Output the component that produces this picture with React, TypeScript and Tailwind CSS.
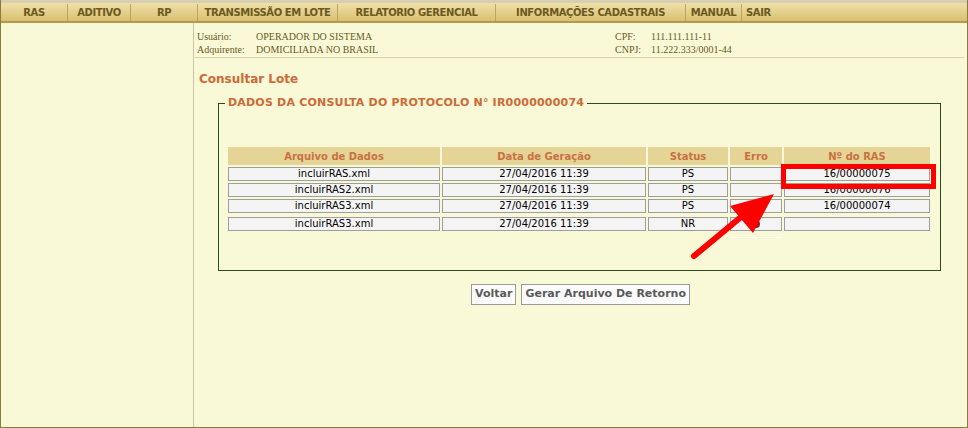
const menu = [
  { label: "RAS", w: "w-[67px]" },
  { label: "ADITIVO", w: "w-[63px]" },
  { label: "RP", w: "w-[67px]" },
  { label: "TRANSMISSÃO EM LOTE", w: "w-[140px]" },
  { label: "RELATORIO GERENCIAL", w: "w-[158px]" },
  { label: "INFORMAÇÕES CADASTRAIS", w: "w-[190px]" },
  { label: "MANUAL", w: "w-[56px]" },
];

const rows = [
  { file: "incluirRAS.xml", date: "27/04/2016 11:39", status: "PS", ras: "16/00000075" },
  { file: "incluirRAS2.xml", date: "27/04/2016 11:39", status: "PS", ras: "16/00000076" },
  { file: "incluirRAS3.xml", date: "27/04/2016 11:39", status: "PS", ras: "16/00000074" },
  { file: "incluirRAS3.xml", date: "27/04/2016 11:39", status: "NR", ras: "", error: true },
];

const cols = "grid grid-cols-[212px_204px_80px_52px_146px] gap-x-[2px]";
const cell =
  "h-[14px] border border-[#9e9e9e] bg-[#f4f4f4] text-center text-[10px] leading-[12px] text-black";

export default function App() {
  return (
    <div
      className="relative w-[968px] h-[428px] overflow-hidden bg-[#f9f9d7] border-l border-r border-b border-[#8c7a3c]"
      style={{ fontFamily: '"DejaVu Sans", Verdana, sans-serif' }}
    >
      {/* top menu */}
      <div className="h-[23px] flex flex-col">
        <div className="h-[3px] bg-[#d6d0b0]" />
        <div className="flex-1 flex items-center bg-gradient-to-b from-[#efe0aa] to-[#d9c070] border-b-2 border-[#b39a4e]">
          {menu.map((m) => (
            <div
              key={m.label}
              className={`${m.w} h-[17px] flex items-center justify-center border-r border-[#bba55c] text-[10px] font-bold tracking-[-0.4px] text-[#6b5a1c]`}
            >
              {m.label}
            </div>
          ))}
          <div className="pl-[4px] text-[10px] font-bold tracking-[-0.4px] text-[#6b5a1c]">SAIR</div>
        </div>
      </div>

      <div className="flex h-[404px]">
        <aside className="w-[193px] shrink-0 border-r border-[#cac6a4]" />

        <main className="flex-1 flex flex-col">
          {/* user info */}
          <div
            className="ml-[1px] mr-[3px] pt-[7px] pb-[1px] border-b border-[#d6cfa8] text-[10px] leading-[13px] text-[#6b5a24]"
            style={{ fontFamily: '"Liberation Serif", "Times New Roman", serif' }}
          >
            <div className="flex">
              <span className="w-[61px] pl-[2px]">Usuário:</span>
              <span className="w-[359px]">OPERADOR DO SISTEMA</span>
              <span className="w-[36px]">CPF:</span>
              <span>111.111.111-11</span>
            </div>
            <div className="flex">
              <span className="w-[61px] pl-[2px]">Adquirente:</span>
              <span className="w-[359px]">DOMICILIADA NO BRASIL</span>
              <span className="w-[36px]">CNPJ:</span>
              <span>11.222.333/0001-44</span>
            </div>
          </div>

          <h1 className="mt-[14px] pl-[5px] text-[12px] leading-[15px] font-bold text-[#cd6a36]">
            Consultar Lote
          </h1>

          <fieldset className="ml-[24px] mr-[26px] mt-[9px] border border-[#2d4a1d] pl-[9px] pr-[9px] pb-[32px]">
            <legend className="-ml-[3px] px-[3px] text-[11px] leading-[14px] font-bold tracking-[0.2px] text-[#cd6a36]">
              DADOS DA CONSULTA DO PROTOCOLO N° IR0000000074
            </legend>

            <div className="mt-[37px] flex flex-col gap-y-[2px]">
              <div className={`${cols} h-[18px]`}>
                {["Arquivo de Dados", "Data de Geração", "Status", "Erro", "Nº do RAS"].map((h) => (
                  <div
                    key={h}
                    className="bg-[#e4d597] flex items-center justify-center text-[10px] font-bold text-[#c9713f]"
                  >
                    {h}
                  </div>
                ))}
              </div>

              {rows.map((r, i) => (
                <div key={i} className={`${cols} ${r.error ? "mt-[2px]" : ""}`}>
                  <div className={cell}>{r.file}</div>
                  <div className={cell}>{r.date}</div>
                  <div className={cell}>{r.status}</div>
                  <div className={`${cell} flex items-center justify-center`}>
                    {r.error && <span className="w-[8px] h-[8px] rounded-full bg-[#8e2020]" />}
                  </div>
                  <div className={`${cell} text-[#5b4b1b]`}>{r.ras}</div>
                </div>
              ))}

              <div className={`${cols} mt-[4px]`}>
                <div />
                <div />
                <div />
                <div className="h-px bg-white" />
                <div />
              </div>
            </div>
          </fieldset>

          <div className="mt-[13px] flex justify-center gap-[5px]">
            <button className="h-[21px] px-[3px] border border-[#9a9a9a] bg-[#fbfbfb] text-[11px] font-bold text-[#5a5a5a]">
              Voltar
            </button>
            <button className="h-[21px] px-[3px] border border-[#9a9a9a] bg-[#fbfbfb] text-[11px] font-bold text-[#5a5a5a]">
              Gerar Arquivo De Retorno
            </button>
          </div>
        </main>
      </div>

      {/* annotation: highlight box and arrow */}
      <div className="absolute left-[780px] top-[164px] w-[155px] h-[25px] border-[5px] border-[#ff0000] pointer-events-none" />
      <svg className="absolute left-0 top-0 pointer-events-none" width="968" height="428">
        <line x1="693" y1="256" x2="752" y2="207" stroke="#ff0000" strokeWidth="6" strokeLinecap="round" />
        <polygon points="773,194 729,206 752,233" fill="#ff0000" />
      </svg>
    </div>
  );
}
